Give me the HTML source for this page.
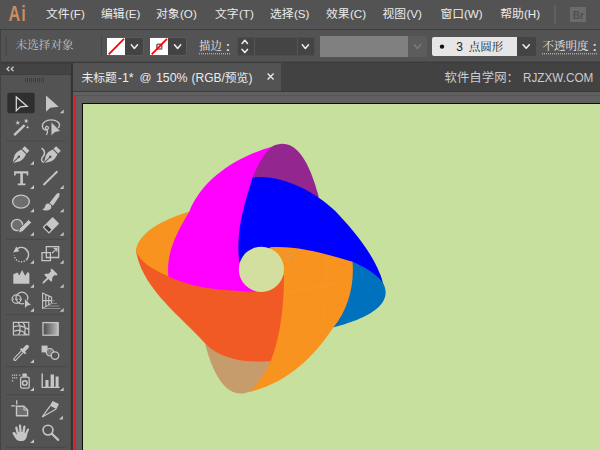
<!DOCTYPE html>
<html lang="zh"><head><meta charset="utf-8"><title>Adobe Illustrator</title>
<style>
html,body{margin:0;padding:0}
body{width:600px;height:450px;overflow:hidden;position:relative;background:#535353;font-family:"Liberation Sans", "Noto Sans CJK SC", sans-serif;}
div{position:absolute;box-sizing:border-box}
#ov{position:absolute;left:0;top:0}
#ov text{font-family:"Liberation Sans", "Noto Sans CJK SC", sans-serif}
#ov text.sf{font-family:"Liberation Serif", "Noto Serif CJK SC", serif}
</style></head>
<body>
<div style="left:0px;top:0px;width:600px;height:29px;background:#535353;"></div>
<div style="left:0px;top:29px;width:600px;height:1.2px;background:#3e3e3e;"></div>
<div style="left:0px;top:30px;width:600px;height:32px;background:#535353;"></div>
<div style="left:0px;top:61.2px;width:600px;height:1px;background:#4a4a4a;"></div>
<div style="left:0px;top:62.2px;width:600px;height:1.4px;background:#3b3b3b;"></div>
<div style="left:0px;top:63.6px;width:71px;height:10.8px;background:#434343;"></div>
<div style="left:0px;top:74.4px;width:71px;height:0.8px;background:#3e3e3e;"></div>
<div style="left:0px;top:75.2px;width:71px;height:376px;background:#535353;"></div>
<div style="left:0px;top:30px;width:1.1px;height:420px;background:#424242;"></div>
<div style="left:69.6px;top:75.2px;width:1.4px;height:375px;background:#4b4b4b;"></div>
<div style="left:71px;top:63.6px;width:2.2px;height:387px;background:#343434;"></div>
<div style="left:73px;top:63px;width:527px;height:28px;background:#424242;"></div>
<div style="left:73px;top:63px;width:208px;height:28px;background:#535353;"></div>
<div style="left:73px;top:91px;width:527px;height:1.2px;background:#3b3b3b;"></div>
<div style="left:73px;top:92px;width:527px;height:358px;background:#606060;"></div>
<div style="left:74px;top:94.8px;width:526px;height:1.6px;background:#cf2229;"></div>
<div style="left:74px;top:94.8px;width:1.6px;height:356px;background:#cf2229;"></div>
<div style="left:82px;top:102.5px;width:518px;height:348px;background:#0d0d0d;"></div>
<div style="left:83.1px;top:103.6px;width:517px;height:347px;background:#c7e09e;"></div>
<div style="left:101px;top:34px;width:1px;height:23px;background:#474747;"></div>
<div style="left:106.5px;top:36.8px;width:37.4px;height:19.4px;background:#434343;border-radius:3px;border:1px solid #5a5a5a;"></div>
<div style="left:107.2px;top:37.6px;width:18px;height:17.8px;background:#fff;"></div>
<div style="left:149.5px;top:36.8px;width:37.4px;height:19.4px;background:#434343;border-radius:3px;border:1px solid #5a5a5a;"></div>
<div style="left:150.2px;top:37.6px;width:18px;height:17.8px;background:#fff;"></div>
<div style="left:236.5px;top:37px;width:78px;height:19px;background:#444;border-radius:2px;border:1px solid #4d4d4d;"></div>
<div style="left:253.8px;top:38px;width:1px;height:17px;background:#565656;"></div>
<div style="left:296.5px;top:38px;width:1px;height:17px;background:#565656;"></div>
<div style="left:320px;top:36px;width:88px;height:20.5px;background:#808080;"></div>
<div style="left:408px;top:36px;width:18.5px;height:20.5px;background:#5c5c5c;border-radius:0 2px 2px 0;"></div>
<div style="left:431.5px;top:37px;width:104px;height:19px;background:#444;border-radius:2px;"></div>
<div style="left:432px;top:37px;width:85px;height:19px;background:#e6e6e6;border-radius:2px 0 0 2px;"></div>
<div style="left:554px;top:5px;width:1.5px;height:19px;background:#606060;"></div>
<div style="left:570px;top:6.8px;width:16.2px;height:15.4px;background:#6b6b6b;"></div>
<svg id="ov" width="600" height="450" viewBox="0 0 600 450">
<g>
<path fill="#93278f" d="M271.7 146.7C300.4 131.9 313.4 177.8 318.7 197L300 225L250 190L255 160Z"/>
<path fill="#f7931e" d="M189.2 211.7C171.1 217.2 139.7 228.8 135.8 250L150 280L200 282Z"/>
<path fill="#0071bc" d="M382.8 282.5C397.6 309.7 350.6 322.7 333.3 327.5L335 290L350 256L380 274Z"/>
<path fill="#c69c6d" d="M205 343.3C209.7 361.8 222.5 402.6 249.2 391.7L266 385L282 355L240 335Z"/>
<path fill="#ff00ff" d="M271.7 146.7C238 156.6 202.8 177.7 189.2 211.7C177.6 231.2 166.3 251.4 168.3 275L168 290L255 300L265 270L262 185L252.5 177.5C257.3 166.4 262.7 155.1 271.7 146.7Z"/>
<path fill="#0000ff" d="M239.3 262C235.4 232.4 244 205.3 252.5 177.5C281 174.1 314.8 191.3 335 210.8C353.7 230.5 375.6 256 382.8 282.5C375.6 272.9 363.3 266.4 352.5 261.7L300 265L262 272Z"/>
<path fill="#f7931e" d="M270 247.3C298.2 245.4 325.8 254 352.5 261.7C354.6 284.5 348.1 309.8 333.3 327.5C313 358.4 286.1 383.3 249.2 392C259 383.7 264.9 372.1 270.8 361L262 330L262 270Z"/>
<path fill="#f15a24" d="M168.5 276.5C195.4 289.5 226.5 290.4 255.8 291.7L262 275L284 275C283.9 303.8 281.2 333.8 270.8 361C248.5 363 221.3 360.5 205 343.3C180.2 315.4 142 289 135.8 250C140.5 264.1 156.2 270.7 168.5 276.5Z"/>
<circle cx="261.4" cy="269.3" r="22.6" fill="#d3df9e"/>
<path fill="none" stroke="#fbb04f" stroke-opacity="0.4" stroke-width="0.8" stroke-dasharray="2 1.6" d="M326.8 257C326.6 285 325 312 321.5 334M284.5 292.3C306 289.5 327 285.5 346 281"/>
<text transform="translate(290 263.5) rotate(-38)" font-weight="bold" font-size="15" fill="#e39a45" fill-opacity="0.7">R</text>
</g>
<path fill="none" stroke="#d8d8d8" stroke-width="1.2" d="M9.3 66.7L7 68.9L9.3 71.1M13.5 66.7L11.2 68.9L13.5 71.1"/>
<path stroke="#3e3e3e" stroke-width="1" d="M25.5 78V82.3M27.5 78V82.3M29.5 78V82.3M31.5 78V82.3M33.5 78V82.3M35.5 78V82.3M37.5 78V82.3M39.5 78V82.3M41.5 78V82.3M43.5 78V82.3"/>
<rect x="6" y="140.5" width="59.5" height="1" fill="#484848"/>
<rect x="6" y="238.8" width="59.5" height="1" fill="#484848"/>
<rect x="6" y="314.2" width="59.5" height="1" fill="#484848"/>
<rect x="6" y="366.2" width="59.5" height="1" fill="#484848"/>
<rect x="6" y="394.3" width="59.5" height="1" fill="#484848"/>
<rect x="6" y="446.8" width="59.5" height="1" fill="#484848"/>
<path fill="#c6c6c6" d="M63.7 109.5V113.3H59.900000000000006Z"/>
<path fill="#c6c6c6" d="M34 160.89999999999998V164.7H30.2Z"/>
<path fill="#c6c6c6" d="M34 185.1V188.9H30.2Z"/>
<path fill="#c6c6c6" d="M63.7 185.1V188.9H59.900000000000006Z"/>
<path fill="#c6c6c6" d="M34 208.5V212.3H30.2Z"/>
<path fill="#c6c6c6" d="M63.7 208.5V212.3H59.900000000000006Z"/>
<path fill="#c6c6c6" d="M34 232.0V235.8H30.2Z"/>
<path fill="#c6c6c6" d="M63.7 232.0V235.8H59.900000000000006Z"/>
<path fill="#c6c6c6" d="M34 260.0V263.8H30.2Z"/>
<path fill="#c6c6c6" d="M63.7 260.0V263.8H59.900000000000006Z"/>
<path fill="#c6c6c6" d="M34 284.0V287.8H30.2Z"/>
<path fill="#c6c6c6" d="M63.7 284.0V287.8H59.900000000000006Z"/>
<path fill="#c6c6c6" d="M34 308.0V311.8H30.2Z"/>
<path fill="#c6c6c6" d="M63.7 308.0V311.8H59.900000000000006Z"/>
<path fill="#c6c6c6" d="M34 359.2V363H30.2Z"/>
<path fill="#c6c6c6" d="M34 387.2V391H30.2Z"/>
<path fill="#c6c6c6" d="M63.7 387.2V391H59.900000000000006Z"/>
<path fill="#c6c6c6" d="M62.9 415.59999999999997V419.4H59.1Z"/>
<path fill="#c6c6c6" d="M34 439.2V443H30.2Z"/>
<rect x="7.3" y="92.7" width="27.4" height="20.6" rx="2" fill="#2f2f2f"/>
<path fill="none" stroke="#d6d6d6" stroke-width="1.3" stroke-linejoin="miter" d="M16.3 96.9V110.7L20.3 106.9L27.2 106.2Z"/>
<path fill="#c6c6c6" d="M46 95.6V111.8L50.3 107.7L58.7 106.8Z"/>
<path stroke="#c6c6c6" stroke-width="2.4" d="M14.2 135.1L24.6 125.1"/>
<path fill="#c6c6c6" d="M17.80 120.00L18.39 121.89L20.37 121.87L18.75 123.01L19.39 124.88L17.80 123.70L16.21 124.88L16.85 123.01L15.23 121.87L17.21 121.89ZM27.10 118.42L27.10 120.40L29.00 120.96L27.12 121.58L27.17 123.56L26.00 121.96L24.14 122.62L25.30 121.01L24.09 119.44L25.98 120.05ZM27.60 125.30L28.09 126.71L29.50 127.20L28.09 127.69L27.60 129.10L27.11 127.69L25.70 127.20L27.11 126.71Z"/>
<path fill="none" stroke="#c6c6c6" stroke-width="1.3" d="M42.4 126.6C41.8 122.6 46.5 119.9 51 119.9C56.5 119.9 60.4 122.6 59.3 126.2C59 127.2 58.4 127.9 57.6 128.5M42.4 126.6C42.7 129.6 46 131 47.8 129.3C49 128.1 48.3 126.3 46.8 126.4C45.3 126.5 45 128.4 46.3 129.3C47.8 130.3 48 132.6 46.3 134.8"/>
<path fill="#c6c6c6" stroke="#535353" stroke-width="0.9" d="M51 121.6V136.2L54.9 132.5L60.8 131.3Z"/>
<g transform="translate(20.2 155.4) rotate(45)"><rect x="-3.3" y="-9.7" width="6.6" height="3.7" fill="#c6c6c6"/><path fill="#c6c6c6" d="M-3.3 -4.9H3.3C4.7 -1.6 5 1.6 3.9 4.2L0.5 10.2V3.1A1.25 1.25 0 1 0 -0.5 3.1V10.2L-3.9 4.2C-5 1.6 -4.7 -1.6 -3.3 -4.9Z"/></g>
<g transform="translate(51.6 155.4) rotate(45)"><rect x="-3.3" y="-9.7" width="6.6" height="3.7" fill="#c6c6c6"/><path fill="#c6c6c6" d="M-3.3 -4.9H3.3C4.7 -1.6 5 1.6 3.9 4.2L0.5 10.2V3.1A1.25 1.25 0 1 0 -0.5 3.1V10.2L-3.9 4.2C-5 1.6 -4.7 -1.6 -3.3 -4.9Z"/></g>
<path fill="none" stroke="#c6c6c6" stroke-width="1.5" d="M41.6 148.2C45 150.6 45.4 153.8 43 156.6C41 159 41 161.4 43.8 162.6"/>
<path fill="#c6c6c6" d="M14.1 171.2H28.3V175.5H26.7V173.4H22.9V183.4H25.5V185.2H17.8V183.4H20.3V173.4H15.7V175.5H14.1Z"/>
<path stroke="#c6c6c6" stroke-width="1.9" d="M43.5 185L57.4 171.3"/>
<ellipse cx="21" cy="201.6" rx="8.4" ry="6.5" fill="#6e6e6e" stroke="#c6c6c6" stroke-width="1.4"/>
<path fill="#c6c6c6" d="M59 193.1C60 193.9 59.7 196 58.6 197.6L52.9 205.7L49.5 203.1L55.5 195.2C56.7 193.6 58.2 192.6 59 193.1ZM48.9 203.8C51.9 205 52.3 208.3 49.6 209.8C47.2 211.1 44 210.7 42.3 209.6C44.4 208.8 44.8 207.2 45.2 205.8C45.8 203.9 47.4 203.2 48.9 203.8Z"/>
<circle cx="17" cy="225" r="5.6" fill="#6e6e6e" stroke="#c6c6c6" stroke-width="1.4"/>
<path fill="#c6c6c6" stroke="#535353" stroke-width="0.9" d="M18.4 233L19.6 228.3L28.7 219.6L31.6 222.6L22.7 231.5Z"/>
<g transform="translate(50.8 225.4) rotate(45)"><rect x="-4.6" y="-7.2" width="9.2" height="14.4" rx="0.8" fill="#c6c6c6"/><rect x="-3.3" y="2.6" width="6.6" height="3.3" fill="#3c3c3c"/></g>
<path fill="none" stroke="#c6c6c6" stroke-width="1.6" d="M17.3 248.7A7.2 7.2 0 0 1 26.9 259.2"/>
<path fill="none" stroke="#c6c6c6" stroke-width="1.6" stroke-dasharray="1.2 1.5" d="M26.9 259.2A7.2 7.2 0 0 1 14.2 255.2"/>
<path fill="#c6c6c6" d="M16.3 246.6L19.3 251.2L13.2 252.4Z"/>
<path fill="none" stroke="#c6c6c6" stroke-width="1.3" d="M46.3 246.6H58.7V257.5H46.3ZM42 252.6H50.4V260.7H42Z"/>
<path fill="none" stroke="#c6c6c6" stroke-width="1.2" d="M52 253.3L56.8 248.6M53.6 248.4H57V251.8"/>
<path fill="#c6c6c6" d="M13.3 283.8V274.3L17.5 272.4L19.2 275.4L22.1 270.1L25.1 275.8L27.9 271.7L29.4 273.8V283.8Z"/>
<g transform="translate(48.2 277.8) rotate(45) scale(0.92)"><path fill="#c6c6c6" d="M-4.4 -10H4.4V-7.6H2.9V-3.4L5.3 -0.8V0.8H1V7.4L0 9L-1 7.4V0.8H-5.3V-0.8L-2.9 -3.4V-7.6H-4.4Z"/></g>
<ellipse cx="16.5" cy="299.1" rx="4.4" ry="4.3" fill="none" stroke="#c6c6c6" stroke-width="1.2"/>
<circle cx="21.9" cy="298" r="5.9" fill="none" stroke="#c6c6c6" stroke-width="1.2"/>
<path stroke="#c6c6c6" stroke-width="1" stroke-dasharray="1 1" d="M13 299.2H23"/>
<path fill="#c6c6c6" stroke="#535353" stroke-width="0.9" d="M24.5 298.2V308.8L27.4 306.1L31.6 305.2Z"/>
<path fill="none" stroke="#c6c6c6" stroke-width="1.1" d="M42.6 293V308.4L51.6 303.2V297.2ZM45.8 294.5V306.6M48.8 295.8V304.8M42.6 300.6H51.6"/>
<path fill="none" stroke="#8e8e8e" stroke-width="1" d="M51.6 300.8H54.4M50 303.5H57M47 306H59.2M43 308.5H60.6"/>
<path fill="none" stroke="#c6c6c6" stroke-width="1.2" d="M13.4 322.4H28.8V335H13.4ZM18 322.4C20.5 326 20.5 331 18.5 335M23 322.4C26 326.5 25.5 331 24 335M13.4 327C18 325 24 326 28.8 329.5M13.4 331.5C18 329.5 23 330.5 27 335"/>
<defs><linearGradient id="gr"><stop offset="0" stop-color="#484848"/><stop offset="1" stop-color="#bdbdbd"/></linearGradient></defs>
<rect x="43" y="322.6" width="15.2" height="12.6" fill="url(#gr)" stroke="#c6c6c6" stroke-width="1.3"/>
<path stroke="#c6c6c6" stroke-width="3.6" stroke-linecap="round" d="M15 359.2L22.4 351.6"/>
<path stroke="#535353" stroke-width="1.4" stroke-linecap="round" d="M15.2 359L22.2 351.8"/>
<path stroke="#c6c6c6" stroke-width="2" d="M20.6 348.6L25.6 353.6"/>
<path stroke="#c6c6c6" stroke-width="3.8" stroke-linecap="round" d="M23.6 350.4L27 346.7"/>
<rect x="41.6" y="345.6" width="6" height="6.8" fill="#c6c6c6"/>
<circle cx="50" cy="352.2" r="3.7" fill="#787878" stroke="#c6c6c6" stroke-width="1.2"/>
<circle cx="55" cy="355.6" r="3.8" fill="#535353" stroke="#c6c6c6" stroke-width="1.3"/>
<path fill="#c6c6c6" d="M11.9 374.4h1.3v1.3h-1.3zM13.9 374.4h1.3v1.3h-1.3zM15.9 374.4h1.3v1.3h-1.3zM18.9 374.4h1.3v1.3h-1.3zM11.9 377.3h1.3v1.3h-1.3zM13.9 377.3h1.3v1.3h-1.3zM15.9 377.3h1.3v1.3h-1.3zM11.9 380.2h1.3v1.3h-1.3z"/>
<rect x="20.6" y="377.2" width="8.6" height="11" rx="1.4" fill="none" stroke="#c6c6c6" stroke-width="1.3"/>
<rect x="22.4" y="373.4" width="4.4" height="3.4" rx="0.8" fill="#c6c6c6"/>
<circle cx="24.8" cy="383" r="2.3" fill="none" stroke="#c6c6c6" stroke-width="1.5"/>
<path fill="none" stroke="#c6c6c6" stroke-width="1.4" d="M42.2 373.4V387.4H59.6"/>
<path fill="#c6c6c6" d="M45.4 380H48.5V387H45.4ZM50.6 374.4H54V387H50.6ZM55.6 376.4H58.6V387H55.6Z"/>
<path fill="none" stroke="#c6c6c6" stroke-width="1.3" d="M11.1 405.9H15.3M16.7 400.3V404.4"/>
<path fill="#6e6e6e" stroke="#c6c6c6" stroke-width="1.4" d="M16.5 406.3H23.9L27.6 410V415.7H16.5Z"/>
<path fill="none" stroke="#c6c6c6" stroke-width="1" d="M23.9 406.3V410H27.6"/>
<path fill="#c6c6c6" d="M52.6 400.9L58.9 403.9L56.6 408.9L49.8 405.8Z"/>
<path fill="none" stroke="#c6c6c6" stroke-width="1.2" d="M50 406.2L42.2 416.9L56.2 408.9"/>
<path fill="#c6c6c6" d="M19.8 440.9C17.8 440.9 16.6 440 15.6 438.4L12.9 434.2C12.3 433.2 12.6 432.3 13.4 432C14.2 431.7 15 432.2 15.6 433L17 434.9L15.3 428.3C15.1 427.4 15.5 426.8 16.1 426.6C16.7 426.5 17.3 426.8 17.5 427.7L18.8 432.2L19.4 432.1L18.9 425.9C18.8 425 19.3 424.5 19.9 424.5C20.5 424.4 21.1 424.9 21.2 425.8L21.6 432L22.2 432L23.3 426.5C23.5 425.6 24.1 425.3 24.7 425.4C25.3 425.5 25.7 426.1 25.5 427L24.6 432.7L25.2 432.9L27 429.3C27.4 428.5 28 428.3 28.5 428.6C29 428.9 29.2 429.5 28.8 430.3L27.3 434C26.9 437.8 25.4 440.9 22.6 440.9Z"/>
<circle cx="48" cy="430.1" r="4.9" fill="none" stroke="#c6c6c6" stroke-width="1.6"/>
<path stroke="#c6c6c6" stroke-width="2.2" stroke-linecap="round" d="M51.8 433.8L58.2 439.9"/>
<path stroke="#404040" stroke-width="1.6" stroke-dasharray="1 1" d="M6.2 37V56.5"/>
<path stroke="#ff0000" stroke-width="1.8" d="M108.7 54.3L124 38.9"/>
<path fill="none" stroke="#ececec" stroke-width="1.55" stroke-linecap="round" stroke-linejoin="round" d="M131.3 44.800000000000004L134.4 48.4L137.5 44.800000000000004"/>
<rect x="156.9" y="44.2" width="4.8" height="4.8" rx="0.8" fill="none" stroke="#6e6e6e" stroke-width="1.6"/>
<path stroke="#ff0000" stroke-width="1.8" d="M151.7 54.3L167 38.9"/>
<path fill="none" stroke="#ececec" stroke-width="1.55" stroke-linecap="round" stroke-linejoin="round" d="M174.5 44.800000000000004L177.6 48.4L180.7 44.800000000000004"/>
<path stroke="#cfcfcf" stroke-width="1" stroke-dasharray="1 1" d="M199 53.8H231"/>
<path stroke="#cfcfcf" stroke-width="1" stroke-dasharray="1 1" d="M542 53.8H597"/>
<path fill="none" stroke="#ececec" stroke-width="1.55" stroke-linecap="round" stroke-linejoin="round" d="M242.10000000000002 43.5L244.8 40.3L247.5 43.5"/>
<path fill="none" stroke="#ececec" stroke-width="1.55" stroke-linecap="round" stroke-linejoin="round" d="M242.10000000000002 49.4L244.8 52.6L247.5 49.4"/>
<path fill="none" stroke="#ececec" stroke-width="1.55" stroke-linecap="round" stroke-linejoin="round" d="M302.29999999999995 44.800000000000004L305.4 48.4L308.5 44.800000000000004"/>
<path fill="none" stroke="#7a7a7a" stroke-width="1.55" stroke-linecap="round" stroke-linejoin="round" d="M414.4 44.800000000000004L417.5 48.4L420.6 44.800000000000004"/>
<circle cx="442" cy="46.6" r="2.2" fill="#111"/>
<path fill="none" stroke="#ececec" stroke-width="1.55" stroke-linecap="round" stroke-linejoin="round" d="M523.1 44.7L526.2 48.3L529.3000000000001 44.7"/>
<path stroke="#e6e6e6" stroke-width="1.4" d="M267.6 73.6L273.6 79.6M273.6 73.6L267.6 79.6"/>
<text x="46" y="18.3" font-size="11.8" fill="#ebebeb">文件</text>
<text x="70" y="18.3" font-size="11.6" fill="#ebebeb" xml:space="preserve">(F)</text>
<text x="101" y="18.3" font-size="11.8" fill="#ebebeb">编辑</text>
<text x="125" y="18.3" font-size="11.6" fill="#ebebeb" xml:space="preserve">(E)</text>
<text x="156" y="18.3" font-size="11.8" fill="#ebebeb">对象</text>
<text x="180" y="18.3" font-size="11.6" fill="#ebebeb" xml:space="preserve">(O)</text>
<text x="215" y="18.3" font-size="11.8" fill="#ebebeb">文字</text>
<text x="239" y="18.3" font-size="11.6" fill="#ebebeb" xml:space="preserve">(T)</text>
<text x="270" y="18.3" font-size="11.8" fill="#ebebeb">选择</text>
<text x="294" y="18.3" font-size="11.6" fill="#ebebeb" xml:space="preserve">(S)</text>
<text x="326" y="18.3" font-size="11.8" fill="#ebebeb">效果</text>
<text x="350" y="18.3" font-size="11.6" fill="#ebebeb" xml:space="preserve">(C)</text>
<text x="382.5" y="18.3" font-size="11.8" fill="#ebebeb">视图</text>
<text x="406.5" y="18.3" font-size="11.6" fill="#ebebeb" xml:space="preserve">(V)</text>
<text x="440.5" y="18.3" font-size="11.8" fill="#ebebeb">窗口</text>
<text x="464" y="18.3" font-size="11.6" fill="#ebebeb" xml:space="preserve">(W)</text>
<text x="500.2" y="18.3" font-size="11.8" fill="#ebebeb">帮助</text>
<text x="524" y="18.3" font-size="11.6" fill="#ebebeb" xml:space="preserve">(H)</text>
<text class="sf" x="15.6" y="49.2" font-size="11.6" fill="#c2c2c2">未选择对象</text>
<text class="sf" x="199" y="50.2" font-size="11.4" fill="#e8e8e8">描边</text>
<text class="sf" x="542.4" y="50.2" font-size="11.5" fill="#e8e8e8">不透明度</text>
<text x="225.8" y="51" font-size="13" font-weight="bold" fill="#dedede">:</text>
<text x="592.6" y="51" font-size="13" font-weight="bold" fill="#dedede">:</text>
<text x="456.3" y="50.8" font-size="12" fill="#1a1a1a" xml:space="preserve">3</text>
<text class="sf" x="468.8" y="50.5" font-size="11.5" fill="#1a1a1a">点圆形</text>
<text transform="translate(8.4 20.7) scale(0.73 1)" font-size="22.2" font-weight="bold" letter-spacing="1.7" fill="#cb8c62">Ai</text>
<text x="572.8" y="18.8" font-size="11.4" font-weight="bold" fill="#4f4f4f" textLength="11" lengthAdjust="spacingAndGlyphs">Br</text>
<text x="81.5" y="81.9" font-size="11.8" fill="#ebebeb">未标题</text>
<text x="117.8" y="81.5" font-size="12.4" fill="#ebebeb" xml:space="preserve">-1*</text>
<text x="139.5" y="81.3" font-size="11.8" fill="#ebebeb" xml:space="preserve">@</text>
<text x="155.9" y="81.5" font-size="12.4" fill="#ebebeb" xml:space="preserve">150%</text>
<text x="191.6" y="81.5" font-size="12" fill="#ebebeb" xml:space="preserve">(RGB/</text>
<text x="224.8" y="81.9" font-size="11.8" fill="#ebebeb">预览</text>
<text x="248.5" y="81.5" font-size="12" fill="#ebebeb" xml:space="preserve">)</text>
<text x="444.6" y="82" font-size="12.4" fill="#cccccc">软件自学网：</text>
<text x="523" y="81.9" font-size="12.3" fill="#cccccc" textLength="70.3" lengthAdjust="spacingAndGlyphs">RJZXW.COM</text>
</svg>
</body></html>
